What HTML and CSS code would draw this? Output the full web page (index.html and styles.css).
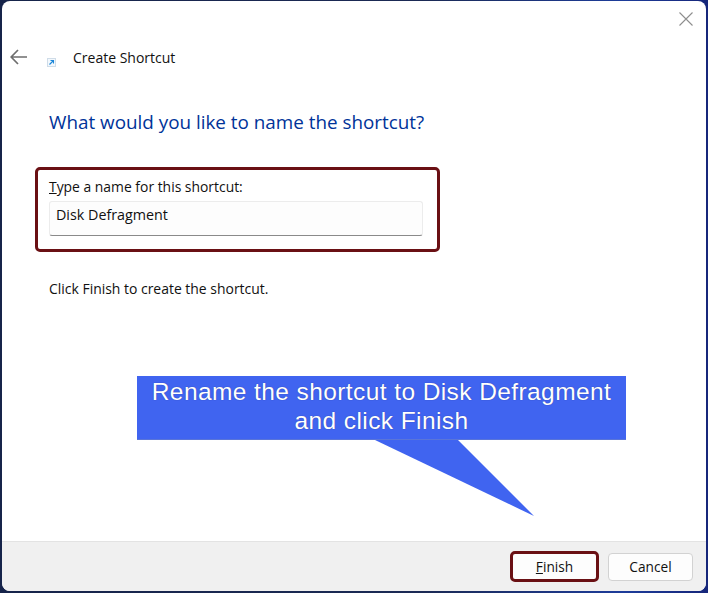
FILE: index.html
```html
<!DOCTYPE html>
<html lang="en">
<head>
<meta charset="utf-8">
<title>Create Shortcut</title>
<link rel="stylesheet" href="styles.css">
</head>
<body>
<div class="window">
  <div class="close-row">
    <svg class="close-icon" width="14" height="14" viewBox="0 0 14 14"><path d="M.5.5l13 13M13.500.5l-13 13" stroke="#8e8e8e" stroke-width="1.100" fill="none"/></svg>
  </div>
  <header class="title-row">
    <svg class="back-icon" width="18" height="16" viewBox="0 0 18 16"><path d="M8 1L1.200 8 8 15M1.500 8H17" stroke="#6e6e6e" stroke-width="1.700" fill="none"/></svg>
    <svg class="shortcut-icon" width="9" height="9" viewBox="0 0 9 9"><rect x=".5" y=".5" width="8" height="8" fill="#f2f8fd" stroke="#cfdce8"/><path d="M2.500 6.500L6.500 2.500M3.500 2.500h3v3" stroke="#1a86d8" stroke-width="1.100" fill="none"/></svg>
    <span class="title-text">Create Shortcut</span>
  </header>
  <main class="content">
    <h1 class="heading">What would you like to name the shortcut?</h1>
    <div class="name-box">
      <label class="name-label"><u>T</u>ype a name for this shortcut:</label>
      <div class="name-input">Disk Defragment</div>
    </div>
    <p class="hint">Click Finish to create the shortcut.</p>
  </main>
  <footer class="footer">
    <div class="btn btn-primary"><u>F</u>inish</div>
    <div class="btn btn-cancel">Cancel</div>
  </footer>
</div>
<div class="callout">
  <div class="callout-text">Rename the shortcut to Disk Defragment<br>and click Finish</div>
  <svg class="callout-tail" width="160" height="77" viewBox="0 0 160 77"><polygon points="0,0 83,0 159,76" fill="#4064f0"/></svg>
</div>
</body>
</html>
```
FILE: styles.css
```css
html, body { margin: 0; height: 100%; }
body {
  width: 708px;
  height: 593px;
  overflow: hidden;
  box-sizing: border-box;
  padding: 1px 2px 2px 2px;
  background: linear-gradient(90deg, #16244a 0%, #1b2a55 60%, #1d3c9a 88%, #16267a 100%);
  font-family: "Open Sans", "Noto Sans", sans-serif;
  color: #111;
  position: relative;
}
.window {
  height: 590px;
  background: #fff;
  border-radius: 8px;
  display: flex;
  flex-direction: column;
  overflow: hidden;
}
.close-row {
  height: 37px;
  display: flex;
  justify-content: flex-end;
  align-items: flex-end;
  padding-right: 13px;
  box-sizing: border-box;
  padding-bottom: 12px;
}
.title-row {
  height: 38px;
  display: flex;
  align-items: center;
  padding-left: 8px;
}
.back-icon { flex: none; }
.shortcut-icon { flex: none; margin: 10px 0 0 19px; }
.title-text { margin-left: 17px; font-size: 14px; }
.content {
  flex: 1;
  padding: 0 0 0 47px;
}
.heading {
  margin: 32px 0 0;
  font-weight: 400;
  font-size: 18.85px;
  line-height: 28px;
  color: #003399;
}
.name-box {
  margin: 31px 0 0 -14px;
  width: 405px;
  height: 85px;
  box-sizing: border-box;
  border: 3px solid #6a1014;
  border-radius: 5px;
  padding: 7px 0 0 11px;
}
.name-label { display: block; font-size: 13.9px; line-height: 20px; }
.name-input {
  margin-top: 4px;
  width: 374px;
  height: 35px;
  box-sizing: border-box;
  background: #fdfdfd;
  border: 1px solid #ececec;
  border-bottom: 1px solid #8a8a8a;
  border-radius: 3px;
  padding: 3px 0 0 6px;
  font-size: 14.3px;
  line-height: 20px;
}
.hint { margin: 27px 0 0; font-size: 13.95px; line-height: 20px; }
.footer {
  height: 49px;
  flex: none;
  background: #f0f0f0;
  border-top: 1px solid #e3e3e3;
  display: flex;
  justify-content: flex-end;
  align-items: center;
  gap: 9px;
  padding-right: 13px;
}
.btn {
  box-sizing: border-box;
  display: flex;
  align-items: center;
  justify-content: center;
  background: #fdfdfd;
  font-size: 13.7px;
}
.btn-primary { width: 89px; height: 31px; border: 3px solid #6a1014; border-radius: 5px; }
.btn-cancel { width: 85px; height: 28px; border: 1px solid #d2d2d2; border-radius: 4px; }
.callout {
  position: absolute;
  left: 137px;
  top: 376px;
  width: 489px;
}
.callout-text {
  height: 64px;
  box-sizing: border-box;
  background: #4064f0;
  border-bottom: 1px solid #5a75d8;
  color: #fff;
  text-align: center;
  font-family: "Liberation Sans", Arial, sans-serif;
  font-size: 24.500px;
  letter-spacing: .41px;
  line-height: 29px;
  padding-top: 1px;
  text-shadow: 0 0 1px rgba(20, 30, 90, .6);
}
.callout-tail { display: block; margin-left: 238px; }
```
